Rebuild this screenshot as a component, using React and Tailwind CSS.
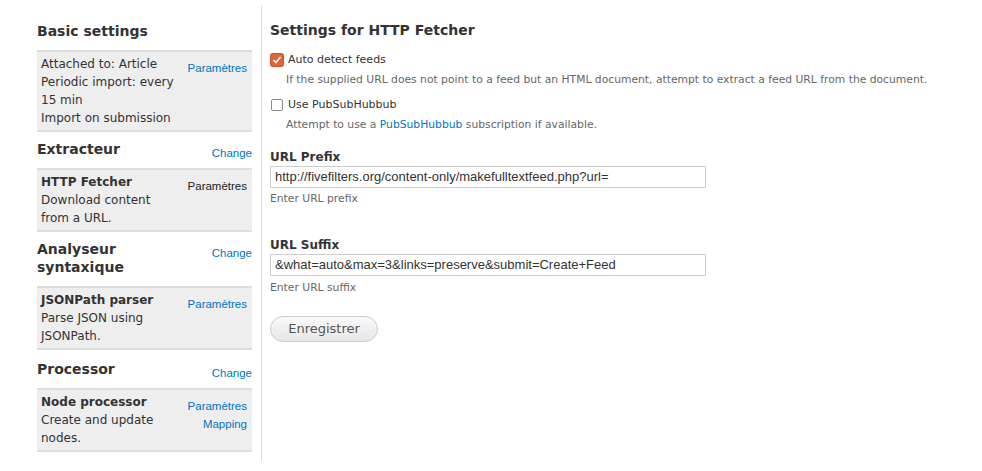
const dv = "font-['DejaVu_Sans',sans-serif]";
const ls = "font-['Liberation_Sans',Arial,sans-serif]";

function SideLink({ children, dark }) {
  return (
    <a className={`${ls} block text-[11.5px] leading-[18px] ${dark ? 'text-[#222]' : 'text-[#0074bd]'}`}>{children}</a>
  );
}

function Section({ title, change, children, links, gap = 'mt-[8px]' }) {
  return (
    <div className={gap}>
      <div className="flex items-start justify-between">
        <h2 className={`${dv} font-bold text-[14px] leading-[18px] text-[#333] w-[130px]`}>{title}</h2>
        {change && <div className="mt-[4px] -mb-[4px]"><SideLink>Change</SideLink></div>}
      </div>
      <div className="bg-[#eee] border-y-2 border-[#ddd] mt-[10px] flex justify-between pl-[4px] pr-[5px] pt-[3px] pb-[3px]">
        <div className={`${dv} text-[12px] leading-[18px] text-[#333] w-[134px]`}>{children}</div>
        <div className="flex flex-col items-end pt-[4px]">{links}</div>
      </div>
    </div>
  );
}

function Check({ checked }) {
  return checked ? (
    <span className="w-[12px] h-[12px] rounded-[2px] bg-[#e2643a] flex items-center justify-center shadow-[0_0_0_1px_#c9552f]">
      <svg width="10" height="10" viewBox="0 0 10 10"><path d="M1.5 5 L4 7.5 L8.5 2" stroke="#fff" strokeWidth="1.6" fill="none" /></svg>
    </span>
  ) : (
    <span className="w-[12px] h-[12px] rounded-[2px] border border-[#888] bg-white" />
  );
}

export default function App() {
  return (
    <div className="w-[982px] h-[471px] bg-white flex items-start">
      <div className="w-[225px] ml-[37px] mt-[5px] pt-[17px] pr-[9px] border-r border-[#ddd] h-[456px] flex flex-col">
        <Section title="Basic settings" gap="" links={<SideLink>Paramètres</SideLink>}>
          <div>Attached to: Article</div>
          <div>Periodic import: every 15 min</div>
          <div>Import on submission</div>
        </Section>
        <Section title="Extracteur" change links={<SideLink dark>Paramètres</SideLink>}>
          <div className="font-bold">HTTP Fetcher</div>
          <div>Download content from a URL.</div>
        </Section>
        <Section title="Analyseur syntaxique" change links={<SideLink>Paramètres</SideLink>}>
          <div className="font-bold">JSONPath parser</div>
          <div>Parse JSON using JSONPath.</div>
        </Section>
        <Section title="Processor" change gap="mt-[10px]" links={<><SideLink>Paramètres</SideLink><SideLink>Mapping</SideLink></>}>
          <div className="font-bold">Node processor</div>
          <div>Create and update nodes.</div>
        </Section>
      </div>
      <div className="flex-1 pl-[8px] pt-[21px]">
        <h2 className={`${dv} font-bold text-[14px] leading-[18px] text-[#333]`}>Settings for HTTP Fetcher</h2>
        <div className="mt-[14px] h-[14px] flex items-center gap-[5px] pl-[1px]">
          <Check checked />
          <span className={`${dv} text-[11px] text-[#333]`}>Auto detect feeds</span>
        </div>
        <p className={`${dv} text-[10.75px] leading-[14px] text-[#666] ml-[16px] mt-[6px]`}>If the supplied URL does not point to a feed but an HTML document, attempt to extract a feed URL from the document.</p>
        <div className="mt-[11px] h-[14px] flex items-center gap-[5px] pl-[1px]">
          <Check />
          <span className={`${dv} text-[11px] text-[#333]`}>Use PubSubHubbub</span>
        </div>
        <p className={`${dv} text-[10.75px] leading-[14px] text-[#666] ml-[16px] mt-[6px]`}>Attempt to use a <a className="text-[#0074bd]">PubSubHubbub</a> subscription if available.</p>
        <label className={`${dv} block font-bold text-[12px] leading-[16px] text-[#333] mt-[17px]`}>URL Prefix</label>
        <div className={`${ls} mt-[1px] w-[436px] h-[22px] border border-[#ccc] px-[4px] text-[13px] leading-[20px] text-[#333]`}>http://fivefilters.org/content-only/makefulltextfeed.php?url=</div>
        <p className={`${dv} text-[10.75px] leading-[14px] text-[#666] mt-[4px]`}>Enter URL prefix</p>
        <label className={`${dv} block font-bold text-[12px] leading-[16px] text-[#333] mt-[31px]`}>URL Suffix</label>
        <div className={`${ls} mt-[1px] w-[436px] h-[22px] border border-[#ccc] px-[4px] text-[13px] leading-[20px] text-[#333]`}>&amp;what=auto&amp;max=3&amp;links=preserve&amp;submit=Create+Feed</div>
        <p className={`${dv} text-[10.75px] leading-[14px] text-[#666] mt-[5px]`}>Enter URL suffix</p>
        <button className={`${dv} mt-[21px] w-[108px] h-[26px] rounded-full border border-[#ccc] bg-gradient-to-b from-[#fafafa] to-[#e6e6e6] text-[13px] text-[#555]`}>Enregistrer</button>
      </div>
    </div>
  );
}
